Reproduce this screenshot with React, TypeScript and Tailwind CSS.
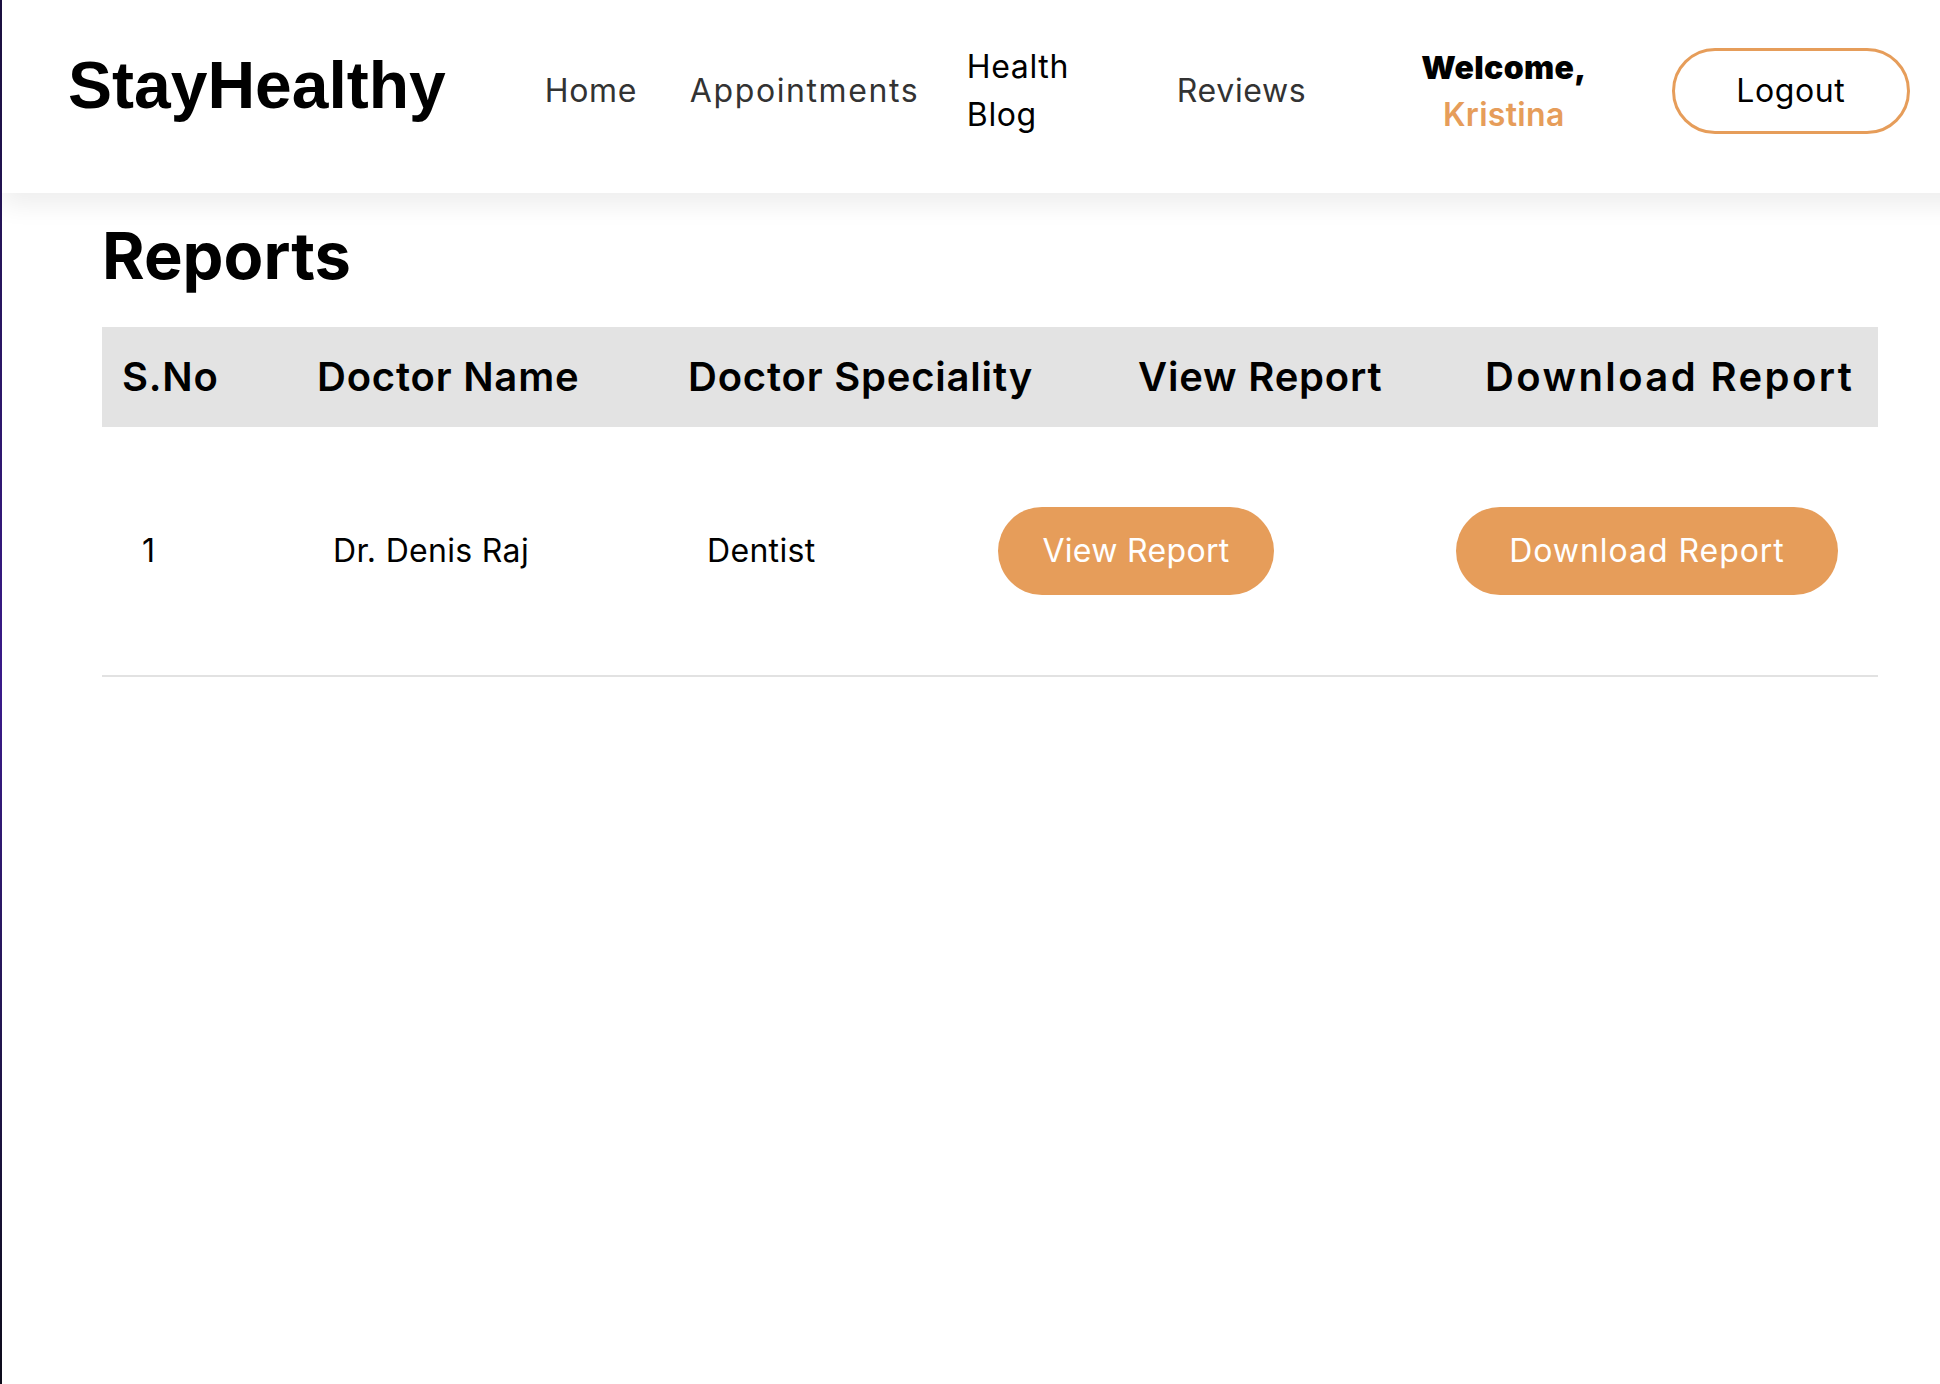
const ORANGE = "#e69d5a";

const reports = [
  { id: 1, name: "Dr. Denis Raj", speciality: "Dentist" },
];

function Header() {
  return (
    <header className="relative z-10 flex h-[193px] items-center bg-white pb-[12px] shadow-[0_12px_24px_rgba(0,0,0,0.07)]">
      <div className="ml-[66px] mb-[12px] font-['Liberation_Sans',Arial,sans-serif] text-[66px] font-bold leading-none text-black">
        StayHealthy
      </div>
      <nav className="ml-[99px] flex items-center text-[32px] tracking-[0.02em] text-[#333]">
        <a className="w-[145px]">Home</a>
        <a className="w-[277px] tracking-[0.05em]">Appointments</a>
        <a className="w-[210px] leading-[48px] text-black">
          Health
          <br />
          Blog
        </a>
        <a className="w-[200px]">Reviews</a>
      </nav>
      <div className="flex w-[254px] flex-col items-center text-[32px] leading-[47px] tracking-[0.01em]">
        <span className="font-black text-black">Welcome,</span>
        <span className="font-semibold text-[#e69d5a]">Kristina</span>
      </div>
      <button className="ml-[41px] flex h-[86px] w-[238px] items-center justify-center rounded-full border-[3px] border-[#e69d5a] bg-white text-[32px] tracking-[0.02em] text-black">
        Logout
      </button>
    </header>
  );
}

function ReportsTable() {
  const cols = "grid grid-cols-[195px_371px_310px_458px_442px]";
  return (
    <div className="w-[1776px]">
      <div className={`${cols} h-[100px] items-center bg-[#e3e3e3] text-[40px] font-semibold tracking-[0.02em] text-black`}>
        <div className="pl-[20px]">S.No</div>
        <div className="pl-[20px] whitespace-nowrap">Doctor Name</div>
        <div className="pl-[20px] whitespace-nowrap">Doctor Speciality</div>
        <div className="pl-[160px] whitespace-nowrap">View Report</div>
        <div className="pl-[49px] whitespace-nowrap tracking-[0.06em]">Download Report</div>
      </div>
      {reports.map((r) => (
        <div
          key={r.id}
          className={`${cols} h-[250px] items-center border-b-2 border-[#e2e2e2] text-[32px] tracking-[0.01em] text-black`}
        >
          <div className="pl-[40px]">{r.id}</div>
          <div className="pl-[36px]">{r.name}</div>
          <div className="pl-[39px]">{r.speciality}</div>
          <div className="pl-[20px]">
            <button
              className="flex h-[88px] w-[276px] items-center justify-center rounded-full text-[32px] tracking-[0.01em] text-white"
              style={{ backgroundColor: ORANGE }}
            >
              View Report
            </button>
          </div>
          <div className="pl-[20px]">
            <button
              className="flex h-[88px] w-[382px] items-center justify-center rounded-full text-[32px] tracking-[0.03em] text-white"
              style={{ backgroundColor: ORANGE }}
            >
              Download Report
            </button>
          </div>
        </div>
      ))}
    </div>
  );
}

export default function App() {
  return (
    <div className="flex min-h-[1384px] w-[1940px] bg-white font-['Inter',sans-serif]">
      <div className="w-[2px] shrink-0 bg-gradient-to-b from-[#1b1040] via-[#3a1a8a] to-[#0d0b1a]" />
      <div className="flex-1">
        <Header />
        <main className="px-[100px]">
          <h1 className="mt-[30px] text-[65px] font-bold leading-none text-black">Reports</h1>
          <div className="mt-[39px]">
            <ReportsTable />
          </div>
        </main>
      </div>
    </div>
  );
}
